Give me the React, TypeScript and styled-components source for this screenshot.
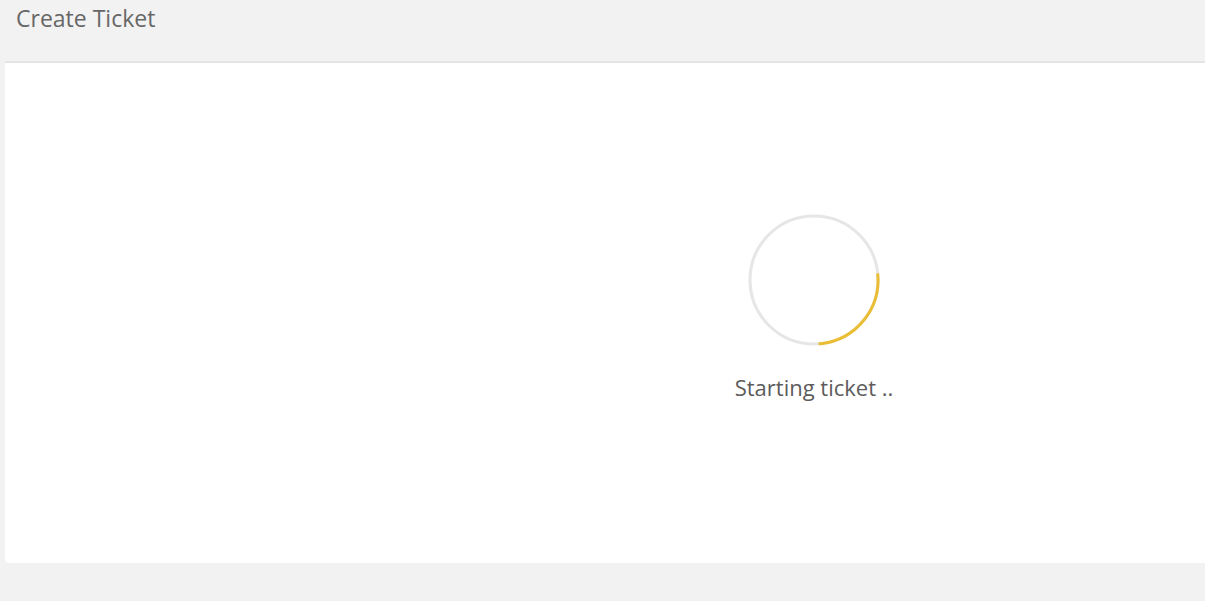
import React from "react";
import styled, { createGlobalStyle } from "styled-components";

const Global = createGlobalStyle`
  html, body { margin: 0; padding: 0; background: #f2f2f2; overflow: hidden; }
  body { font-family: "Open Sans", "Liberation Sans", sans-serif; }
`;

const Page = styled.div`
  width: 100%;
  height: 601px;
  background: #f2f2f2;
  display: flex;
  flex-direction: column;
`;

const Header = styled.header`
  height: 61px;
  padding: 4px 0 0 16px;
  box-sizing: border-box;
`;

const Title = styled.h1`
  margin: 0;
  font-size: 23px;
  font-weight: 400;
  line-height: 28px;
  color: #676767;
`;

const Card = styled.section`
  margin-left: 5px;
  height: 502px;
  box-sizing: border-box;
  background: #ffffff;
  border-top: 2px solid #e4e4e4;
  border-radius: 0 0 0 4px;
  display: flex;
  flex-direction: column;
  align-items: center;
  padding: 151px 0 0 418px;
`;

const SpinnerSvg = styled.svg`
  display: block;
  width: 132px;
  height: 132px;
`;

const Message = styled.p`
  margin: 27px 0 0;
  font-size: 22px;
  line-height: 28px;
  color: #5c5c5c;
  white-space: nowrap;
`;

function Spinner() {
  const r = 64;
  const c = 2 * Math.PI * r;
  const arc = c * 0.255;
  return (
    <SpinnerSvg viewBox="0 0 132 132">
      <circle cx="66" cy="66" r={r} fill="none" stroke="#e6e6e6" strokeWidth="3" />
      <circle
        cx="66"
        cy="66"
        r={r}
        fill="none"
        stroke="#ebbd35"
        strokeWidth="3"
        strokeDasharray={`${arc} ${c}`}
        transform="rotate(-6 66 66)"
      />
    </SpinnerSvg>
  );
}

export default function App() {
  return (
    <Page>
      <Global />
      <Header>
        <Title>Create Ticket</Title>
      </Header>
      <Card>
        <Spinner />
        <Message>Starting ticket ..</Message>
      </Card>
    </Page>
  );
}
